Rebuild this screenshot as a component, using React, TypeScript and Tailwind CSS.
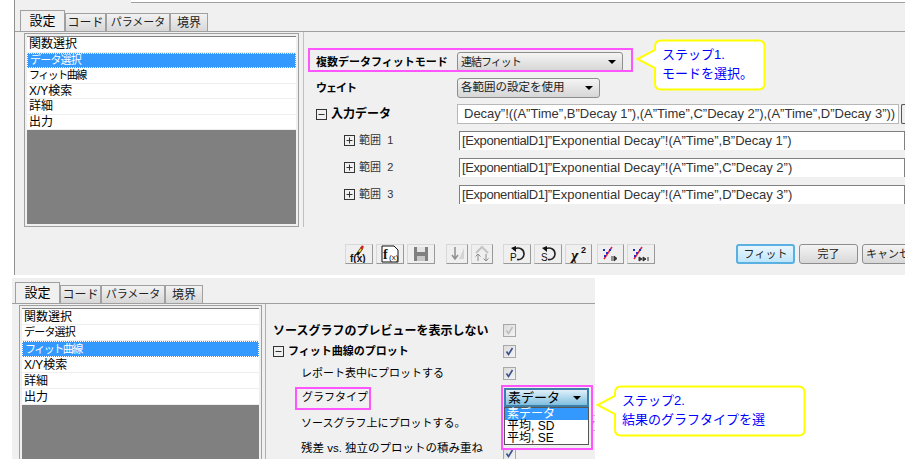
const jp = 'font-["Liberation_Sans","Noto_Sans_CJK_JP",sans-serif]';

const listItems = [
  { label: '関数選択', cls: 'text-[12px]' },
  { label: 'データ選択', cls: 'text-[11px] tracking-[-0.8px]' },
  { label: 'フィット曲線', cls: 'text-[11px] tracking-[-1.5px]' },
  { label: 'X/Y検索', cls: 'text-[12px]' },
  { label: '詳細', cls: 'text-[12px]' },
  { label: '出力', cls: 'text-[12px]' },
];

function Tabs() {
  const tabs = [
    { label: 'コード', w: 'w-[41px]', cls: 'text-[12px]' },
    { label: 'パラメータ', w: 'w-[64px]', cls: 'text-[11px]' },
    { label: '境界', w: 'w-[38px]', cls: 'text-[12px]' },
  ];
  return (
    <div className="flex h-[21px] items-end">
      <div className="z-10 flex h-[21px] w-[45px] items-center justify-center border border-b-0 border-[#a0a0a0] bg-[#f0f0f0] text-[13px] text-black">
        設定
      </div>
      {tabs.map((t) => (
        <div
          key={t.label}
          className={`flex h-[18px] ${t.w} ${t.cls} items-center justify-center border border-b-0 border-[#a0a0a0] bg-gradient-to-b from-[#f2f2f2] to-[#d8d8d8] whitespace-nowrap text-[#222]`}
        >
          {t.label}
        </div>
      ))}
    </div>
  );
}

function SideList({ selected, height, rowH }: { selected: number; height: string; rowH: string }) {
  return (
    <div className={`${height} border border-[#a0a0a0] p-[2px]`}>
      <div className="flex h-full flex-col border-t border-[#808080] bg-[#808080]">
        {listItems.map((item, i) => (
          <div
            key={item.label}
            className={`flex ${rowH} ${item.cls} items-center whitespace-nowrap px-[2px] leading-none ${
              i === selected
                ? 'border border-dotted border-white bg-[#3399ff] text-white'
                : 'border-b border-[#eeeeee] bg-white text-black'
            }`}
          >
            {item.label}
          </div>
        ))}
      </div>
    </div>
  );
}

function Combo({ label, w, cls }: { label: string; w: string; cls: string }) {
  return (
    <div
      className={`flex h-[20px] ${w} items-center justify-between rounded-[3px] border border-[#8e8e8e] bg-gradient-to-b from-[#f4f4f4] to-[#d6d6d6] pl-[3px] pr-[6px] text-[#222]`}
    >
      <span className={cls}>{label}</span>
      <span className="h-0 w-0 border-x-[4px] border-t-[4px] border-x-transparent border-t-black" />
    </div>
  );
}

function Expander({ open }: { open?: boolean }) {
  return (
    <svg width="11" height="11" viewBox="0 0 11 11" className="shrink-0">
      <rect x="0.5" y="0.5" width="10" height="10" fill="none" stroke="#333" />
      <path d="M2.5 5.5h6" stroke="#333" />
      {!open && <path d="M5.5 2.5v6" stroke="#333" />}
    </svg>
  );
}

function RangeRow({ n, col, decay }: { n: number; col: string; decay: number }) {
  return (
    <div className="flex h-[27px] items-center">
      <div className="flex w-[143px] items-center gap-[4px] pl-[28px] text-[11px] text-[#333]">
        <Expander />
        <span>範囲&nbsp;&nbsp;{n}</span>
      </div>
      <div className="h-[19px] flex-1 border border-b-0 border-[#808080] bg-white pl-[2px] text-[13px] leading-[18px] whitespace-nowrap text-[#333]">
        <span className="tracking-[-0.4px]">[ExponentialD1]</span>”Exponential Decay”!(A”Time”,{col}”Decay {decay}”)
      </div>
    </div>
  );
}

function ToolIcon({ kind, w = 'w-[28px]', className = '' }: { kind: string; w?: string; className?: string }) {
  return (
    <div
      className={`flex h-[20px] ${w} items-center justify-center border border-[#d8d8d8] border-r-[#999] border-b-[#999] bg-[#efefef] ${className}`}
    >
      <svg width="20" height="18" viewBox="0 0 20 18">
        {kind === 'pen' && (
          <>
            <path d="M8 10L13 3" stroke="#111" strokeWidth="3" />
            <path d="M10 7L13 3" stroke="#e8d020" strokeWidth="2" />
            <path d="M12 4l2-3" stroke="#d02020" strokeWidth="2.5" />
            <text x="1" y="17" fontSize="10" fontFamily="Liberation Sans" fontWeight="700" fill="#111">f(x)</text>
          </>
        )}
        {kind === 'fx' && (
          <>
            <path d="M2 1h12l4 4v12H2z" fill="#fff" stroke="#111" />
            <text x="3" y="14" fontSize="14" fontFamily="Liberation Serif" fontWeight="700" fill="#111">f</text>
            <text x="9" y="15" fontSize="8" fontFamily="Liberation Sans" fill="#111">(x)</text>
          </>
        )}
        {kind === 'save' && (
          <>
            <path d="M3 2h14v14H3z" fill="#808080" />
            <path d="M6 2h8v5H6z" fill="#e4e4e4" />
            <path d="M6 11h8v5H6z" fill="#c8c8c8" />
          </>
        )}
        {kind === 'down' && (
          <>
            <path d="M8 2v11M5 10l3 4 3-4" stroke="#909090" strokeWidth="1.5" fill="none" />
            <path d="M12 14l5-11v11z" fill="#d4d4d4" />
          </>
        )}
        {kind === 'updown' && (
          <>
            <path d="M4 8l6-6 6 6" stroke="#c4c4c4" strokeWidth="2" fill="none" />
            <path d="M6 9v7M3.5 11.5L6 9l2.5 2.5M14 9v7M11.5 13.5L14 16l2.5-2.5" stroke="#8c8c8c" fill="none" />
          </>
        )}
        {(kind === 'undoP' || kind === 'undoS') && (
          <>
            <path d="M8 3.5c5-1.5 9 1 9 5.5s-4 6-7 5.5" stroke="#222" strokeWidth="1.6" fill="none" />
            <path d="M4 3l5-2v6z" fill="#111" />
            <text x="3" y="16" fontSize="10" fontFamily="Liberation Sans" fill="#111">{kind === 'undoP' ? 'P' : 'S'}</text>
          </>
        )}
        {kind === 'chi' && (
          <>
            <text x="2" y="16" fontSize="16" fontFamily="Liberation Serif" fontWeight="700" fontStyle="italic" fill="#111">χ</text>
            <text x="12" y="8" fontSize="9" fontFamily="Liberation Sans" fontWeight="700" fill="#111">2</text>
          </>
        )}
        {(kind === 'step' || kind === 'end') && (
          <>
            <path d="M3 14L11 2" stroke="#e02040" strokeWidth="1.5" />
            <path d="M2 5h2M5 8h2M8 5h2M3 11h2" stroke="#2030d0" strokeWidth="2" />
            {kind === 'step' ? (
              <path d="M11 11v5M13 11l3 2.5-3 2.5z" stroke="#333" fill="#333" />
            ) : (
              <path d="M8 12l3 2-3 2zM12 12l3 2-3 2zM17 12v4" stroke="#333" fill="#333" />
            )}
          </>
        )}
      </svg>
    </div>
  );
}

function CheckBox({ disabled }: { disabled?: boolean }) {
  return (
    <div className="flex h-[13px] w-[13px] items-center justify-center border border-[#a8a8a8] bg-gradient-to-br from-[#dcdcdc] to-[#f4f4f4]">
      <svg width="9" height="9" viewBox="0 0 9 9">
        <path d="M1.5 4.5l2 3 4-6.5" fill="none" stroke={disabled ? '#bdbdbd' : '#3a4f8f'} strokeWidth="1.6" />
      </svg>
    </div>
  );
}

function TopPanel() {
  return (
    <div className="flex h-[275px] flex-col border-l border-[#909090] bg-[#f0f0f0]">
      <div className="flex h-[3px] shrink-0">
        <div className="w-[116px]" />
        <div className="flex-1 border-b border-[#a0a0a0] bg-white" />
      </div>
      <div className="relative mt-[7px] pl-[5px]">
        <Tabs />
      </div>
      <div className="flex border-t border-[#a0a0a0]">
        <div className="ml-[9px] w-[275px] pt-[1px]">
          <SideList selected={1} height="h-[194px]" rowH="h-[15.5px]" />
        </div>
        <div className="ml-[4px] flex-1 border-l border-[#c0c0c0] pl-[12px] pt-[17px]">
          <div className="flex h-[26px] items-center">
            <div className="w-[141px] text-[11px] font-bold whitespace-nowrap text-black">複数データフィットモード</div>
            <Combo label="連結フィット" w="w-[166px]" cls="text-[11px] tracking-[-1px]" />
          </div>
          <div className="flex h-[26px] items-center">
            <div className="w-[141px] text-[11px] font-bold tracking-[-1px] text-black">ウェイト</div>
            <Combo label="各範囲の設定を使用" w="w-[143px]" cls="text-[11.5px]" />
          </div>
          <div className="flex h-[26px] items-center">
            <div className="flex w-[141px] items-center gap-[4px] text-[12px] font-bold text-black">
              <Expander open />
              <span>入力データ</span>
            </div>
            <div className="h-[20px] w-[442px] border border-[#b8b8b8] bg-white pl-[6px] text-[13px] leading-[18px] whitespace-nowrap text-[#333]">
              Decay”!((A”Time”,B”Decay 1”),(A”Time”,C”Decay 2”),(A”Time”,D”Decay 3”))
            </div>
            <div className="ml-[2px] h-[20px] flex-1 rounded-l-[2px] border border-r-0 border-[#555] bg-[#eee]" />
          </div>
          <RangeRow n={1} col="B" decay={1} />
          <RangeRow n={2} col="C" decay={2} />
          <RangeRow n={3} col="D" decay={3} />
        </div>
      </div>
      <div className="mt-[17px] flex items-center">
        <div className="ml-[330px] flex items-center gap-[3px]">
          <ToolIcon kind="pen" />
          <ToolIcon kind="fx" />
          <ToolIcon kind="save" />
          <ToolIcon kind="down" w="w-[22px]" className="ml-[8px]" />
          <ToolIcon kind="updown" w="w-[22px]" />
          <ToolIcon kind="undoP" className="ml-[7px]" />
          <ToolIcon kind="undoS" />
          <ToolIcon kind="chi" w="w-[27px]" />
          <ToolIcon kind="step" w="w-[27px]" className="ml-[2px]" />
          <ToolIcon kind="end" />
        </div>
        <div className="ml-[81px] flex gap-[4px] text-[11px] text-[#222]">
          <div className="flex h-[20px] w-[59px] items-center justify-center rounded-[3px] border-2 border-[#5ab0e0] bg-gradient-to-b from-[#eaf6fd] to-[#bee6fd]">
            フィット
          </div>
          <div className="flex h-[20px] w-[59px] items-center justify-center rounded-[3px] border border-[#8e8e8e] bg-gradient-to-b from-[#f4f4f4] to-[#d8d8d8]">
            完了
          </div>
          <div className="flex h-[20px] w-[59px] shrink-0 items-center overflow-hidden rounded-[3px] border border-[#8e8e8e] bg-gradient-to-b from-[#f4f4f4] to-[#d8d8d8] pl-[3px] whitespace-nowrap">
            キャンセル
          </div>
        </div>
      </div>
    </div>
  );
}

function SettingRow({ h, children }: { h: string; children: React.ReactNode }) {
  return <div className={`flex ${h} items-center justify-between pr-[79px] text-black`}>{children}</div>;
}

function BottomPanel() {
  return (
    <div className="ml-[12px] flex h-[181px] w-[583px] flex-col overflow-hidden bg-[#f0f0f0] pt-[4px]">
      <div className="pl-[3px]">
        <Tabs />
      </div>
      <div className="flex flex-1 border-t border-[#a0a0a0]">
        <div className="ml-[7px] w-[243px] pt-[1px]">
          <SideList selected={2} height="h-[160px]" rowH="h-[16px]" />
        </div>
        <div className="ml-[3px] flex-1 border-l border-[#b0b0b0] pl-[7px] pt-[16px]">
          <SettingRow h="h-[21px]">
            <span className="text-[12px] font-bold whitespace-nowrap">ソースグラフのプレビューを表示しない</span>
            <CheckBox disabled />
          </SettingRow>
          <SettingRow h="h-[21px]">
            <span className="flex items-center gap-[4px] text-[11px] font-bold">
              <Expander open />
              フィット曲線のプロット
            </span>
            <CheckBox />
          </SettingRow>
          <SettingRow h="h-[22px]">
            <span className="pl-[28px] text-[11px]">レポート表中にプロットする</span>
            <CheckBox />
          </SettingRow>
          <SettingRow h="h-[26px]">
            <span className="pl-[29px] text-[11px]">グラフタイプ</span>
          </SettingRow>
          <div className="-mr-[1px] flex h-[26px] items-center justify-between text-black">
            <span className="pl-[28px] text-[11px]">ソースグラフ上にプロットする。</span>
            <div className="flex h-[16px] w-[20px] items-center justify-end border-y border-[#bbb] pr-[1px]">
              <span className="h-0 w-0 border-x-[3px] border-t-[4px] border-x-transparent border-t-[#999]" />
            </div>
          </div>
          <SettingRow h="h-[26px]">
            <span className="pl-[28px] text-[11.5px]">残差 vs. 独立のプロットの積み重ね</span>
            <div className="pt-[9px]">
              <CheckBox />
            </div>
          </SettingRow>
        </div>
      </div>
    </div>
  );
}

function Callout({ className, width, height, tipY, children }: { className: string; width: number; height: number; tipY: number; children: React.ReactNode }) {
  // bubble is drawn with its tail sticking out 19px on the left
  const x = 19;
  const r = 6;
  const d = `M${x + r} 1.5H${width - r - 1.5}Q${width - 1.5} 1.5 ${width - 1.5} ${r + 1.5}V${height - r - 1.5}Q${width - 1.5} ${height - 1.5} ${width - r - 1.5} ${height - 1.5}H${x + r}Q${x} ${height - 1.5} ${x} ${height - r - 1.5}V${tipY + 9}L1.5 ${tipY}L${x} ${tipY - 9}V${r + 1.5}Q${x} 1.5 ${x + r} 1.5Z`;
  return (
    <div className={`absolute ${className}`} style={{ width, height }}>
      <svg width={width} height={height} className="absolute inset-0">
        <path d={d} fill="#fff" stroke="#ffff00" strokeWidth="2" />
      </svg>
      <div className="absolute top-[6px] left-[26px] text-[13px] leading-[19px] whitespace-nowrap text-[#0000ff]">{children}</div>
    </div>
  );
}

export default function App() {
  return (
    <div className={`relative h-[459px] w-[905px] overflow-hidden bg-white ${jp}`}>
      <div className="ml-[14px]">
        <TopPanel />
      </div>
      <div className="mt-[3px]">
        <BottomPanel />
      </div>

      {/* annotations drawn over the screenshots */}
      <div className="absolute top-[48px] left-[308px] h-[24px] w-[325px] border-2 border-[#ff55ff]" />
      <Callout className="top-[39px] left-[636px]" width={130} height={52} tipY={20}>
        ステップ1.
        <br />
        モードを選択。
      </Callout>

      <div className="absolute top-[387px] left-[295px] h-[23px] w-[76px] border-2 border-[#ff55ff]" />
      <div className="absolute top-[385px] left-[501px] h-[65px] w-[92px] border-2 border-[#ff55ff] bg-[#f0f0f0] p-[1px] pr-[2px]">
        <div className="flex h-[19px] items-center justify-between border-2 border-[#3c7fa8] bg-gradient-to-b from-[#e0f0fa] to-[#7fbfe0] pl-[2px] pr-[6px] text-[13px] leading-none text-black">
          素データ
          <span className="h-0 w-0 border-x-[4px] border-t-[4px] border-x-transparent border-t-black" />
        </div>
        <div className="border border-[#555] bg-white text-[12px] leading-[12px] text-black">
          <div className="bg-[#3399ff] px-[2px] text-white">素データ</div>
          <div className="px-[2px]">平均, SD</div>
          <div className="px-[2px]">平均, SE</div>
        </div>
      </div>
      <Callout className="top-[385px] left-[596px]" width={210} height={52} tipY={20}>
        ステップ2.
        <br />
        結果のグラフタイプを選
      </Callout>
    </div>
  );
}
